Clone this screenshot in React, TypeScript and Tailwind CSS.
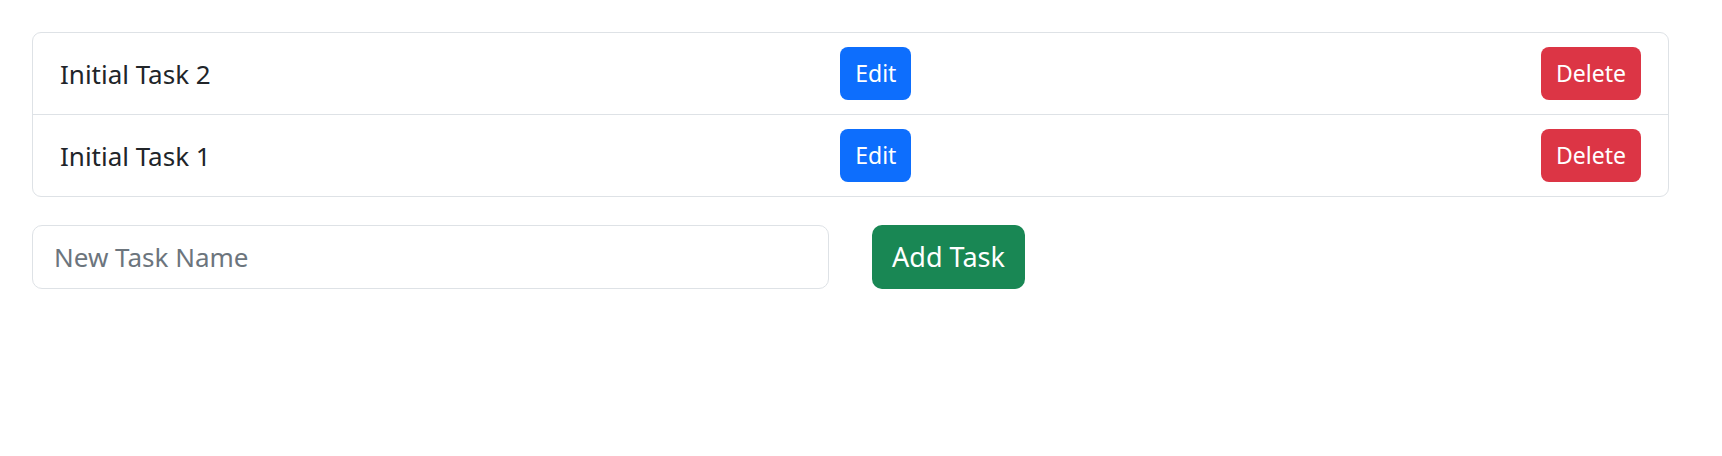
const tasks = ["Initial Task 2", "Initial Task 1"];

export default function App() {
  return (
    <div
      className="min-h-screen bg-white p-[32px] text-[#212529]"
      style={{ fontFamily: '"Segoe UI", "Noto Sans", "Open Sans", sans-serif' }}
    >
      {/* Task list */}
      <ul className="w-[1637px] rounded-[9px] border border-[#dee2e6]">
        {tasks.map((task, i) => (
          <li
            key={task}
            className={
              "flex items-center justify-between px-[27px] py-[14px] " +
              (i < tasks.length - 1 ? "border-b border-[#dee2e6]" : "")
            }
          >
            <span className="text-[26px] leading-none">{task}</span>
            <button className="flex h-[53px] w-[71px] items-center justify-center rounded-[8px] bg-[#0d6efd] text-[23px] text-white">
              Edit
            </button>
            <button className="flex h-[53px] w-[100px] items-center justify-center rounded-[8px] bg-[#dc3545] text-[23px] text-white">
              Delete
            </button>
          </li>
        ))}
      </ul>

      {/* New task */}
      <div className="mt-[28px] flex items-center gap-[43px]">
        <input
          type="text"
          placeholder="New Task Name"
          className="h-[64px] w-[797px] rounded-[10px] border border-[#dee2e6] px-[21px] text-[26px] outline-none placeholder:text-[#6c757d]"
        />
        <button className="flex h-[64px] w-[153px] items-center justify-center rounded-[10px] bg-[#198754] text-[27px] text-white">
          Add Task
        </button>
      </div>
    </div>
  );
}
